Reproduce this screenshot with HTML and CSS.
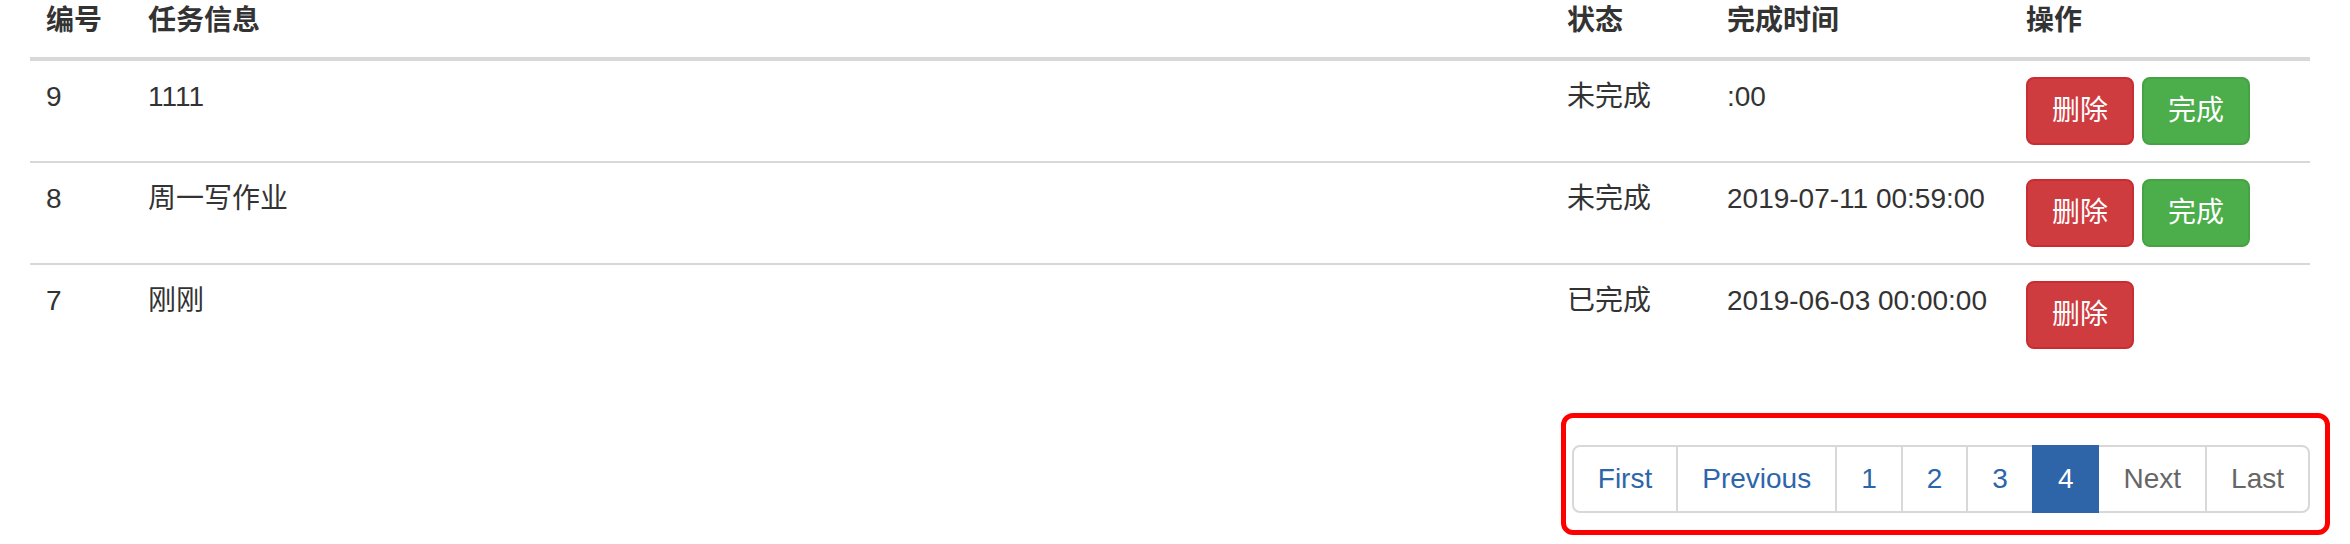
FILE: index.html
```html
<!DOCTYPE html>
<html lang="zh-CN">
<head>
<meta charset="utf-8">
<title>任务列表</title>
<link rel="stylesheet" href="styles.css">
</head>
<body>
<div class="container">
  <table class="table">
    <thead>
      <tr>
        <th class="c-id">编号</th>
        <th class="c-info">任务信息</th>
        <th class="c-status">状态</th>
        <th class="c-time">完成时间</th>
        <th class="c-op">操作</th>
      </tr>
    </thead>
    <tbody>
      <tr>
        <td>9</td>
        <td>1111</td>
        <td>未完成</td>
        <td>:00</td>
        <td><div class="actions"><button class="btn btn-danger">删除</button><button class="btn btn-success">完成</button></div></td>
      </tr>
      <tr>
        <td>8</td>
        <td>周一写作业</td>
        <td>未完成</td>
        <td>2019-07-11 00:59:00</td>
        <td><div class="actions"><button class="btn btn-danger">删除</button><button class="btn btn-success">完成</button></div></td>
      </tr>
      <tr>
        <td>7</td>
        <td>刚刚</td>
        <td>已完成</td>
        <td>2019-06-03 00:00:00</td>
        <td><div class="actions"><button class="btn btn-danger">删除</button></div></td>
      </tr>
    </tbody>
  </table>
  <div class="pager-row">
    <nav class="pager-wrap">
      <ul class="pagination">
        <li><a href="#">First</a></li>
        <li><a href="#">Previous</a></li>
        <li><a href="#">1</a></li>
        <li><a href="#">2</a></li>
        <li><a href="#">3</a></li>
        <li class="active"><a href="#">4</a></li>
        <li class="disabled"><a href="#">Next</a></li>
        <li class="disabled"><a href="#">Last</a></li>
      </ul>
      <span class="highlight"></span>
    </nav>
  </div>
</div>
</body>
</html>
```

FILE: styles.css
```css
* {
  box-sizing: border-box;
}

html, body {
  margin: 0;
  padding: 0;
  background: #fff;
}

body {
  font-family: "Liberation Sans", Arial, "Noto Sans CJK SC", sans-serif;
  font-size: 28px;
  line-height: 40px;
  color: #333;
}

.container {
  padding: 0 40px 0 30px;
}

.table {
  width: 2280px;
  margin: -15px 0 40px 0;
  border-collapse: collapse;
  border-spacing: 0;
  table-layout: fixed;
}

.table th,
.table td {
  padding: 16px;
  text-align: left;
  line-height: 40px;
}

.table th {
  font-weight: bold;
  vertical-align: bottom;
  border-bottom: 4px solid #d8d8d8;
}

.table td {
  vertical-align: top;
  border-top: 2px solid #d8d8d8;
}

.table tbody tr:first-child td {
  border-top: 0;
}

.c-id { width: 102px; }
.c-info { width: 1419px; }
.c-status { width: 160px; }
.c-time { width: 299px; }
.c-op { width: 300px; }

.actions {
  display: flex;
  gap: 8px;
}

.btn {
  display: inline-block;
  margin: 0;
  padding: 12px 24px;
  font-family: "Liberation Sans", Arial, "Noto Sans CJK SC", sans-serif;
  font-size: 28px;
  line-height: 40px;
  font-weight: normal;
  color: #fff;
  border: 2px solid transparent;
  border-radius: 8px;
  cursor: pointer;
}

.btn-danger {
  background: #cf3c40;
  border-color: #c72d31;
}

.btn-success {
  background: #4cad4b;
  border-color: #45a344;
}

.pager-row {
  display: flex;
  justify-content: flex-end;
}

.pager-wrap {
  position: relative;
}

.pagination {
  display: flex;
  list-style: none;
  margin: 40px 0;
  padding: 0;
}

.pagination li a {
  display: block;
  padding: 12px 24px;
  line-height: 40px;
  font-size: 28px;
  color: #2d66a8;
  text-decoration: none;
  background: #fff;
  border: 2px solid #d8d8d8;
  margin-left: -2px;
}

.pagination li:first-child a {
  margin-left: 0;
  border-radius: 8px 0 0 8px;
}

.pagination li:last-child a {
  border-radius: 0 8px 8px 0;
}

.pagination li.active a {
  position: relative;
  background: #2d65a8;
  border-color: #2d65a8;
  color: #fff;
}

.pagination li.disabled a {
  color: #666;
}

.highlight {
  position: absolute;
  top: 8px;
  left: -11px;
  right: -20px;
  bottom: 18px;
  border: 5px solid #ff0000;
  border-radius: 12px;
  pointer-events: none;
}
```
